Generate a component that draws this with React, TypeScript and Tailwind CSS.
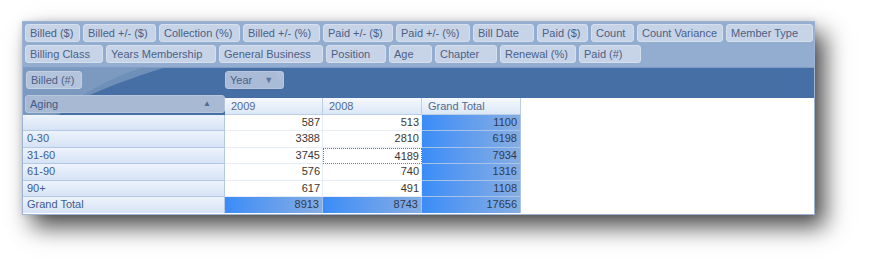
import React from "react";

const row1 = [
  { t: "Billed ($)", w: "w-[55px]" },
  { t: "Billed +/- ($)", w: "w-[73px]" },
  { t: "Collection (%)", w: "w-[81px]" },
  { t: "Billed +/- (%)", w: "w-[77px]" },
  { t: "Paid +/- ($)", w: "w-[70px]" },
  { t: "Paid +/- (%)", w: "w-[74px]" },
  { t: "Bill Date", w: "w-[61px]" },
  { t: "Paid ($)", w: "w-[51px]" },
  { t: "Count", w: "w-[43px]" },
  { t: "Count Variance", w: "w-[86px]" },
  { t: "Member Type", w: "w-[87px]" },
];

const row2 = [
  { t: "Billing Class", w: "w-[78px]" },
  { t: "Years Membership", w: "w-[110px]" },
  { t: "General Business", w: "w-[104px]" },
  { t: "Position", w: "w-[60px]" },
  { t: "Age", w: "w-[43px]" },
  { t: "Chapter", w: "w-[62px]" },
  { t: "Renewal (%)", w: "w-[76px]" },
  { t: "Paid (#)", w: "w-[62px]" },
];

const rows = [
  { label: "", a: "587", b: "513", g: "1100" },
  { label: "0-30", a: "3388", b: "2810", g: "6198" },
  { label: "31-60", a: "3745", b: "4189", g: "7934", sel: true },
  { label: "61-90", a: "576", b: "740", g: "1316" },
  { label: "90+", a: "617", b: "491", g: "1108" },
];

function Chip({ t, w }: { t: string; w: string }) {
  return (
    <div
      className={`${w} h-[18px] shrink-0 rounded-[3px] border border-[#d6dfec] bg-[#c7d4e8] pl-[4px] text-[11px] leading-[16px] text-[#4b5f86] whitespace-nowrap overflow-hidden`}
    >
      {t}
    </div>
  );
}

export default function App() {
  return (
    <div
      className="w-[870px] h-[269px] bg-white pl-[22px] pt-[21px]"
      style={{ fontFamily: '"Liberation Sans", Arial, sans-serif' }}
    >
      <div className="relative w-[793px] h-[194px] bg-white border border-[#9fb4d4] shadow-[10px_12px_22px_rgba(0,0,0,0.7),_0_0_6px_rgba(0,0,0,0.12)] flex flex-col overflow-hidden">
        {/* field list area */}
        <div className="h-[46px] bg-[#93add1] px-[2px] pt-[2px] flex flex-col gap-[3px] border-b border-[#7f9cc6]">
          <div className="flex gap-[3px]">
            {row1.map((c) => (
              <Chip key={c.t} {...c} />
            ))}
          </div>
          <div className="flex gap-[3px]">
            {row2.map((c) => (
              <Chip key={c.t} {...c} />
            ))}
          </div>
        </div>

        {/* dark band */}
        <div className="relative bg-[#4670a5]">
          <svg
            className="absolute left-0 top-0 pointer-events-none"
            width="220"
            height="48"
            viewBox="0 0 220 48"
          >
            <path d="M0 0 L140 0 Q95 14 60 30 Q45 38 35 48 L0 48 Z" fill="#ffffff" fillOpacity="0.22" />
            <path d="M0 0 L118 0 Q70 16 30 48 L0 48 Z" fill="#ffffff" fillOpacity="0.1" />
          </svg>
          <div className="relative h-[27px] flex items-start pt-[3px]">
            <div className="w-[202px] pl-[3px]">
              <div className="w-[56px] h-[18px] rounded-[3px] border border-[#c4d1e4] bg-[#b4c4dd] pl-[4px] text-[11px] leading-[16px] text-[#4b5f86]">
                Billed (#)
              </div>
            </div>
            <div className="w-[59px] h-[18px] rounded-[3px] border border-[#b7c6dc] bg-[#a9bbd6] pl-[4px] text-[11px] leading-[16px] text-[#4b5f86] flex items-center">
              <span>Year</span>
              <span className="ml-[12px] text-[9px] text-[#5b75a0]">▼</span>
              <span className="ml-[4px] -mt-[8px] text-[8px] text-[#c3d0e3]">▽</span>
            </div>
          </div>
          <div className="relative flex h-[20px]">
            <div className="w-[202px] pl-[2px]">
              <div className="w-[200px] h-[18px] rounded-[3px] border border-[#b7c6dc] bg-[#a8b9d4] pl-[4px] pr-[13px] text-[11px] leading-[16px] text-[#3f5a85] flex justify-between items-center">
                <span>Aging</span>
                <span className="text-[8px] text-[#4f6b97]">▲</span>
              </div>
            </div>
            <div className="flex-1 flex flex-col">
              <div className="h-[3px]" />
              <div className="flex-1 flex bg-white">
                {["2009", "2008", "Grand Total"].map((h, i) => (
                  <div
                    key={h}
                    className={`${i === 0 ? "w-[98px]" : "w-[99px]"} h-full bg-gradient-to-b from-[#f6f9fe] to-[#dbe7f7] border-r border-b border-[#bccde6] pl-[6px] text-[11px] leading-[16px] text-[#53698f]`}
                  >
                    {h}
                  </div>
                ))}
              </div>
            </div>
          </div>
        </div>

        {/* table body */}
        <div className="flex flex-col">
          {rows.map((r) => (
            <div key={r.label + r.a} className="flex h-[16.4px]">
              <div className="w-[202px] bg-gradient-to-b from-[#edf3fc] to-[#d6e3f5] border-b border-r border-[#b6c9e4] pl-[4px] text-[11px] leading-[15px] text-[#3f5c8c]">
                {r.label}
              </div>
              <div className="w-[98px] bg-white border-b border-r border-[#e6edf6] pr-[2px] text-right text-[11px] leading-[15px] text-[#3b3632]">
                {r.a}
              </div>
              <div
                className={`w-[99px] bg-white pr-[2px] text-right text-[11px] leading-[15px] text-[#3b3632] ${
                  r.sel ? "border border-dotted border-[#7a7a7a]" : "border-b border-r border-[#e6edf6]"
                }`}
              >
                {r.b}
              </div>
              <div className="w-[99px] bg-gradient-to-r from-[#3a8cf7] to-[#86ade3] border-b border-r border-[#a9c3e8] pr-[3px] text-right text-[11px] leading-[15px] text-[#2f3b4d]">
                {r.g}
              </div>
            </div>
          ))}
          <div className="flex h-[16.4px]">
            <div className="w-[202px] bg-gradient-to-b from-[#edf3fc] to-[#d6e3f5] border-r border-[#b6c9e4] pl-[4px] text-[11px] leading-[15px] text-[#3f5c8c]">
              Grand Total
            </div>
            {[
              { v: "8913", w: "w-[98px]" },
              { v: "8743", w: "w-[99px]" },
              { v: "17656", w: "w-[99px]" },
            ].map((c) => (
              <div
                key={c.v}
                className={`${c.w} bg-gradient-to-r from-[#3a8cf7] to-[#86ade3] border-r border-[#a9c3e8] pr-[3px] text-right text-[11px] leading-[15px] text-[#2f3b4d]`}
              >
                {c.v}
              </div>
            ))}
          </div>
        </div>
      </div>
    </div>
  );
}
